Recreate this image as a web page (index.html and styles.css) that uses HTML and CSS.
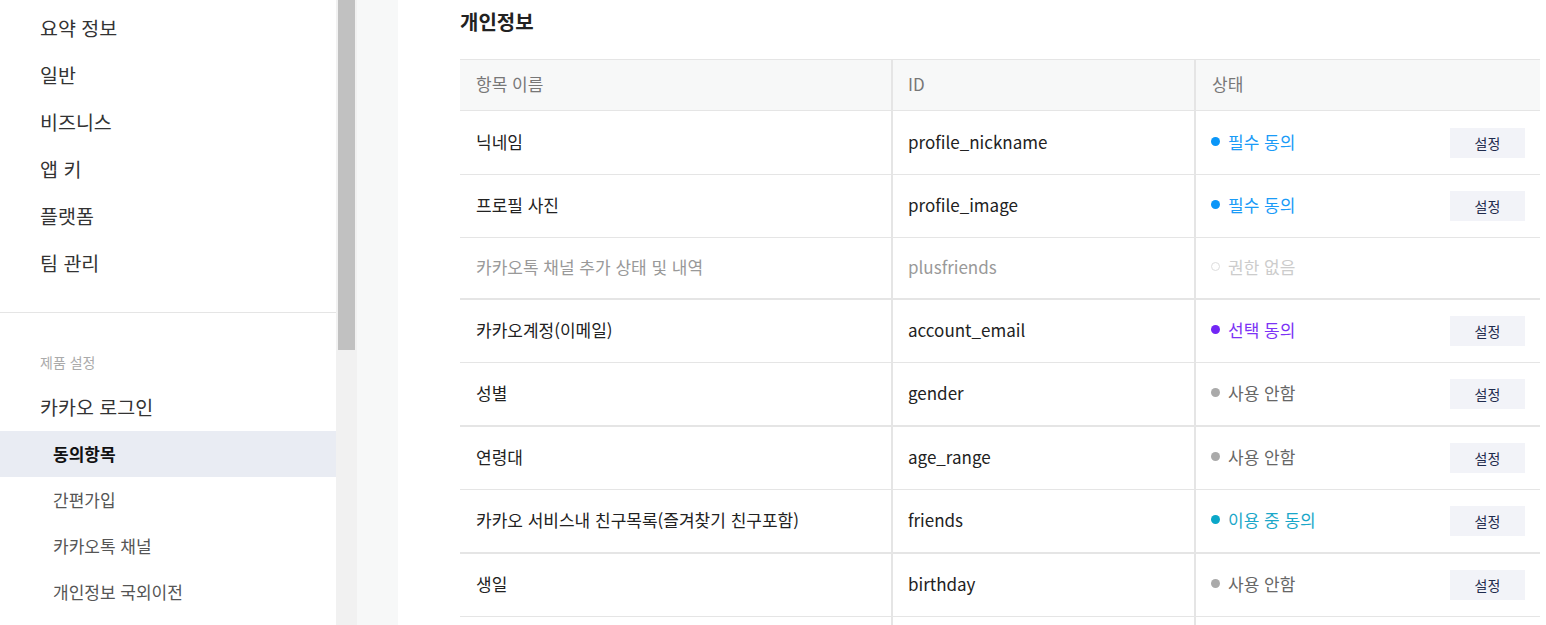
FILE: index.html
```html
<!DOCTYPE html>
<html lang="ko">
<head>
<meta charset="utf-8">
<title>동의항목</title>
<link rel="stylesheet" href="styles.css">
</head>
<body>
<div class="page">
  <aside class="sidebar">
    <nav class="nav">
      <ul class="menu">
        <li class="menu-item">요약 정보</li>
        <li class="menu-item">일반</li>
        <li class="menu-item">비즈니스</li>
        <li class="menu-item">앱 키</li>
        <li class="menu-item">플랫폼</li>
        <li class="menu-item">팀 관리</li>
      </ul>
      <div class="section">
        <div class="section-title">제품 설정</div>
        <div class="menu-item product">카카오 로그인</div>
        <ul class="submenu">
          <li class="sub-item active">동의항목</li>
          <li class="sub-item">간편가입</li>
          <li class="sub-item">카카오톡 채널</li>
          <li class="sub-item">개인정보 국외이전</li>
        </ul>
      </div>
    </nav>
    <div class="scrollbar"><div class="thumb"></div></div>
  </aside>
  <div class="gutter"></div>
  <main class="content">
    <h2 class="title">개인정보</h2>
    <div class="table">
      <div class="row head">
        <div class="cell">항목 이름</div>
        <div class="cell">ID</div>
        <div class="cell">상태</div>
      </div>
      <div class="row first">
        <div class="cell">닉네임</div>
        <div class="cell">profile_nickname</div>
        <div class="cell status"><span class="state required"><i class="dot"></i>필수 동의</span><button class="btn">설정</button></div>
      </div>
      <div class="row">
        <div class="cell">프로필 사진</div>
        <div class="cell">profile_image</div>
        <div class="cell status"><span class="state required"><i class="dot"></i>필수 동의</span><button class="btn">설정</button></div>
      </div>
      <div class="row disabled short group-end">
        <div class="cell">카카오톡 채널 추가 상태 및 내역</div>
        <div class="cell">plusfriends</div>
        <div class="cell status"><span class="state none"><i class="dot"></i>권한 없음</span></div>
      </div>
      <div class="row">
        <div class="cell">카카오계정(이메일)</div>
        <div class="cell">account_email</div>
        <div class="cell status"><span class="state optional"><i class="dot"></i>선택 동의</span><button class="btn">설정</button></div>
      </div>
      <div class="row group-end">
        <div class="cell">성별</div>
        <div class="cell">gender</div>
        <div class="cell status"><span class="state unused"><i class="dot"></i>사용 안함</span><button class="btn">설정</button></div>
      </div>
      <div class="row">
        <div class="cell">연령대</div>
        <div class="cell">age_range</div>
        <div class="cell status"><span class="state unused"><i class="dot"></i>사용 안함</span><button class="btn">설정</button></div>
      </div>
      <div class="row group-end">
        <div class="cell">카카오 서비스내 친구목록(즐겨찾기 친구포함)</div>
        <div class="cell">friends</div>
        <div class="cell status"><span class="state inuse"><i class="dot"></i>이용 중 동의</span><button class="btn">설정</button></div>
      </div>
      <div class="row">
        <div class="cell">생일</div>
        <div class="cell">birthday</div>
        <div class="cell status"><span class="state unused"><i class="dot"></i>사용 안함</span><button class="btn">설정</button></div>
      </div>
      <div class="row">
        <div class="cell">&nbsp;</div>
        <div class="cell">&nbsp;</div>
        <div class="cell">&nbsp;</div>
      </div>
    </div>
  </main>
</div>
</body>
</html>
```
FILE: styles.css
```css
* { box-sizing: border-box; }
html, body { margin: 0; padding: 0; height: 100%; overflow: hidden; }
body {
  font-family: "Noto Sans CJK KR", "Noto Sans", sans-serif;
  color: #222;
  background: #fff;
}
ul { list-style: none; margin: 0; padding: 0; }

.page { display: flex; height: 625px; }

.sidebar { display: flex; width: 357px; flex: none; }
.nav { width: 336px; flex: none; }
.menu { padding-top: 4px; padding-bottom: 26px; border-bottom: 1px solid #e5e5e5; }
.menu-item {
  height: 47px;
  line-height: 47px;
  padding-left: 40px;
  font-size: 19.5px;
  color: #333;
}
.section { padding-top: 34px; }
.section-title {
  height: 30px;
  line-height: 30px;
  padding-left: 40px;
  font-size: 14px;
  color: #aaa;
}
.menu-item.product { height: 46px; line-height: 46px; margin: 7px 0 1px; }
.sub-item {
  height: 46px;
  line-height: 46px;
  padding-left: 53px;
  font-size: 17px;
  color: #555;
}
.sub-item.active { background: #e9ecf3; color: #111; font-weight: 700; }

.scrollbar { width: 21px; background: #f1f1f1; padding: 0 2px; }
.thumb { height: 350px; background: #c1c1c1; }

.gutter { width: 41px; flex: none; background: #f7f8f8; }

.content { flex: 1; padding: 7px 6px 0 62px; }
.title { margin: 0 0 22px; font-size: 20px; font-weight: 700; color: #222; line-height: 30px; }

.table { border-top: 1px solid #e5e5e5; }
.row {
  display: grid;
  grid-template-columns: 431px 2px 301px 2px 1fr;
  height: 63px;
  border-bottom: 1px solid #e5e5e5;
  font-size: 17px;
  color: #222;
}
.row > .cell:nth-child(1) { grid-column: 1; }
.row > .cell:nth-child(2) { grid-column: 3; }
.row > .cell:nth-child(3) { grid-column: 5; }
.row::before, .row::after { content: ""; background: #e5e5e5; grid-row: 1; }
.row::before { grid-column: 2; }
.row::after { grid-column: 4; }
.row.head { height: 51px; background: #f7f8f8; font-size: 17px; color: #777; }
.row.first { height: 64px; }
.row.group-end { height: 64px; border-bottom-width: 2px; }
.row.short { height: 62px; }
.cell { display: flex; align-items: center; padding-left: 16px; padding-bottom: 3px; grid-row: 1; }
.row > .cell:nth-child(2) { padding-left: 15px; }
.status { justify-content: space-between; padding-right: 15px; padding-left: 15px; padding-bottom: 0; }
.state { display: flex; align-items: center; font-size: 17px; margin-bottom: 3px; }
.dot { width: 9px; height: 9px; border-radius: 50%; margin-right: 8px; display: inline-block; }
.required { color: #1a9bf7; }
.required .dot { background: #0a96f8; }
.optional { color: #7c33f5; }
.optional .dot { background: #7226f5; }
.unused { color: #666; }
.unused .dot { background: #aaa; }
.inuse { color: #1aa7c9; }
.inuse .dot { background: #0ba7c8; }
.none { color: #ccc; }
.none .dot { border: 1px solid #ddd; background: #fff; }
.row.disabled { color: #999; }

.btn {
  width: 75px;
  height: 30px;
  border: none;
  background: #f2f3f8;
  color: #1f2b4d;
  font-family: "Noto Sans CJK KR", sans-serif;
  font-size: 14px;
  padding: 0;
}
```
